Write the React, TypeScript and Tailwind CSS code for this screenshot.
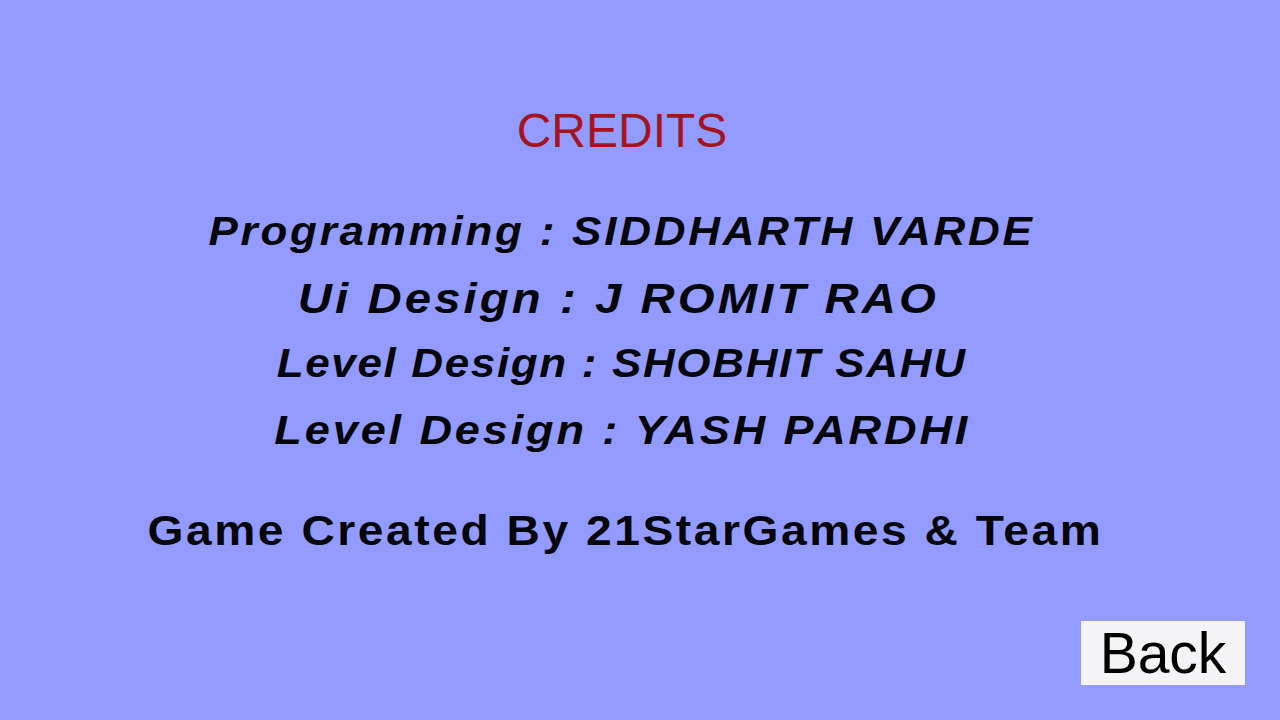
export default function App() {
  const font = { fontFamily: '"Liberation Sans", Arial, sans-serif' };
  return (
    <div
      className="flex h-[720px] w-[1280px] flex-col overflow-hidden bg-[#939cfe] text-[#05050c]"
      style={font}
    >
      <div className="flex flex-col items-center pr-[36px]">
        <h1 className="mt-[107px] text-[48px] leading-none font-normal text-[#a5141d]">
          CREDITS
        </h1>
        <p className="mt-[56px] scale-x-[1.1] text-[40px] leading-none font-bold italic tracking-[2.5px]">
          Programming : SIDDHARTH VARDE
        </p>
        <p className="mt-[26px] mr-[8px] scale-x-[1.1] text-[43px] leading-none font-bold italic tracking-[2.8px]">
          Ui Design : J ROMIT RAO
        </p>
        <p className="mt-[23px] scale-x-[1.1] text-[40px] leading-none font-bold italic tracking-[1.5px]">
          Level Design : SHOBHIT SAHU
        </p>
        <p className="mt-[27px] scale-x-[1.1] text-[41px] leading-none font-bold italic tracking-[2.6px]">
          Level Design : YASH PARDHI
        </p>
        <p className="mt-[59px] ml-[6px] scale-x-[1.1] text-[42px] leading-none font-bold tracking-[2.3px]">
          Game Created By 21StarGames &amp; Team
        </p>
      </div>
      <div className="mt-auto mb-[35px] flex justify-end pr-[35px]">
        <button
          type="button"
          className="flex h-[64px] w-[164px] items-center justify-center bg-[#f4f4f7] text-[57px] leading-none text-black"
        >
          Back
        </button>
      </div>
    </div>
  );
}
